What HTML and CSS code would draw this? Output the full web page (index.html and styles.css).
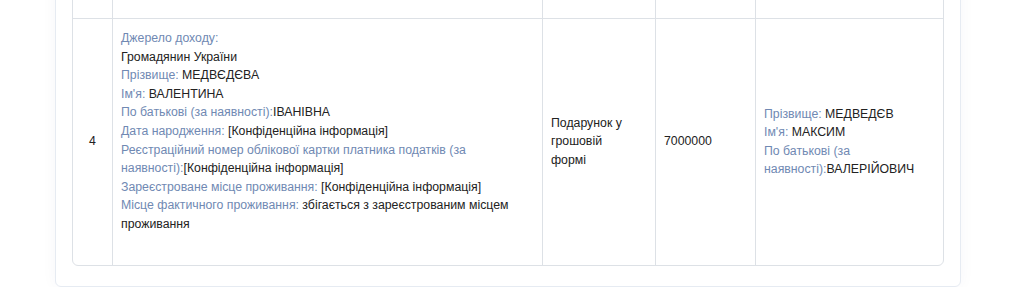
FILE: index.html
```html
<!DOCTYPE html>
<html lang="uk">
<head>
<meta charset="utf-8">
<title>Декларація</title>
<link rel="stylesheet" href="styles.css">
</head>
<body>
<div class="page">
  <div class="card">
    <table class="decl">
      <colgroup>
        <col class="c-num">
        <col class="c-src">
        <col class="c-type">
        <col class="c-sum">
        <col class="c-rcv">
      </colgroup>
      <tbody>
        <tr class="prev">
          <td></td><td></td><td></td><td></td><td></td>
        </tr>
        <tr>
          <td class="num">4</td>
          <td class="src">
            <div><span class="lbl">Джерело доходу:</span></div>
            <div>Громадянин України</div>
            <div><span class="lbl">Прізвище:</span> МЕДВЄДЄВА</div>
            <div><span class="lbl">Ім'я:</span> ВАЛЕНТИНА</div>
            <div><span class="lbl">По батькові (за наявності):</span>ІВАНІВНА</div>
            <div><span class="lbl">Дата народження:</span> [Конфіденційна інформація]</div>
            <div><span class="lbl">Реєстраційний номер облікової картки платника податків (за </span><span class="nw"><span class="lbl">наявності):</span>[Конфіденційна</span> інформація]</div>
            <div><span class="lbl">Зареєстроване місце проживання:</span> [Конфіденційна інформація]</div>
            <div><span class="lbl">Місце фактичного проживання:</span> збігається з зареєстрованим місцем проживання</div>
          </td>
          <td class="type">Подарунок у грошовій формі</td>
          <td>7000000</td>
          <td>
            <div><span class="lbl">Прізвище:</span> МЕДВЕДЄВ</div>
            <div><span class="lbl">Ім'я:</span> МАКСИМ</div>
            <div><span class="lbl">По батькові (за </span><span class="nw"><span class="lbl">наявності):</span>ВАЛЕРІЙОВИЧ</span></div>
          </td>
        </tr>
      </tbody>
    </table>
  </div>
</div>
</body>
</html>
```
FILE: styles.css
```css
html, body {
  margin: 0;
  padding: 0;
  background: #ffffff;
}
body {
  font-family: "Liberation Sans", Arial, sans-serif;
  font-size: 12.3px;
  line-height: 18.6px;
  color: #222222;
  overflow: hidden;
}
.page {
  padding: 0 63px 0 55px;
}
.card {
  margin-top: -40px;
  width: 872px;
  padding: 16px 16px 20px 16px;
  background: #fff;
  border: 1px solid #e6ebf2;
  border-radius: 6px;
  box-shadow: 0 0 16px rgba(40, 60, 100, 0.04);
}
.decl {
  width: 872px;
  table-layout: fixed;
  border-collapse: separate;
  border-spacing: 0;
  border: 1px solid #dde1e6;
  border-radius: 6px;
}
.c-num { width: 39px; }
.c-src { width: 430px; }
.c-type { width: 113px; }
.c-sum { width: 100px; }
.c-rcv { width: 188px; }
.decl td {
  padding: 8px;
  vertical-align: middle;
  border-left: 1px solid #dde1e6;
  border-top: 1px solid #dde1e6;
  text-align: left;
}
.decl td:first-child {
  border-left: none;
}
.decl tr.prev td {
  border-top: none;
  height: 40px;
  padding: 0;
}
.decl td.num {
  text-align: center;
}
.decl td.src {
  vertical-align: top;
  padding-top: 10px;
  padding-bottom: 31px;
}
.decl td.type {
  padding-right: 18px;
}
.nw {
  white-space: nowrap;
}
.lbl {
  color: #7089b3;
}
```
